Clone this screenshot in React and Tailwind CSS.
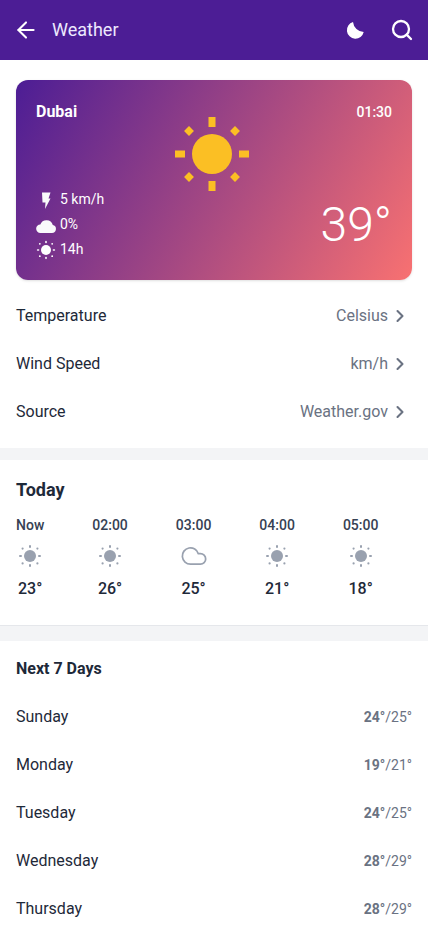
import React from 'react';
import { ArrowLeft, ChevronRight, Search, Cloud } from 'lucide-react';

const settings = [
  { label: 'Temperature', value: 'Celsius' },
  { label: 'Wind Speed', value: 'km/h' },
  { label: 'Source', value: 'Weather.gov' },
];

const hours = [
  { time: 'Now', temp: '23°', icon: 'sun' },
  { time: '02:00', temp: '26°', icon: 'sun' },
  { time: '03:00', temp: '25°', icon: 'cloud' },
  { time: '04:00', temp: '21°', icon: 'sun' },
  { time: '05:00', temp: '18°', icon: 'sun' },
];

const days = [
  { day: 'Sunday', high: '24°', low: '25°' },
  { day: 'Monday', high: '19°', low: '21°' },
  { day: 'Tuesday', high: '24°', low: '25°' },
  { day: 'Wednesday', high: '28°', low: '29°' },
  { day: 'Thursday', high: '28°', low: '29°' },
];

const BigSun = () => (
  <svg width="74" height="74" viewBox="0 0 74 74" fill="#fbbf24">
    <circle cx="37" cy="37" r="20" />
    <rect x="33.5" y="0" width="7" height="10" />
    <rect x="33.5" y="64" width="7" height="10" />
    <rect x="0" y="33.5" width="10" height="7" />
    <rect x="64" y="33.5" width="10" height="7" />
    <rect x="10.5" y="10.5" width="7" height="7" transform="rotate(45 14 14)" />
    <rect x="56.5" y="10.5" width="7" height="7" transform="rotate(45 60 14)" />
    <rect x="10.5" y="56.5" width="7" height="7" transform="rotate(45 14 60)" />
    <rect x="56.5" y="56.5" width="7" height="7" transform="rotate(45 60 60)" />
  </svg>
);

const SmallSun = ({ className, size = 24 }) => (
  <svg width={size} height={size} viewBox="0 0 24 24" fill="currentColor" className={className}>
    <circle cx="12" cy="12" r="6" />
    <rect x="11" y="1" width="2" height="3" rx="1" />
    <rect x="11" y="20" width="2" height="3" rx="1" />
    <rect x="1" y="11" width="3" height="2" rx="1" />
    <rect x="20" y="11" width="3" height="2" rx="1" />
    <circle cx="4.6" cy="4.6" r="1.1" />
    <circle cx="19.4" cy="4.6" r="1.1" />
    <circle cx="4.6" cy="19.4" r="1.1" />
    <circle cx="19.4" cy="19.4" r="1.1" />
  </svg>
);

export default function App() {
  return (
    <div className="h-screen overflow-hidden bg-white font-['Roboto',sans-serif] text-gray-800">
      {/* HEADER */}
      <header className="h-[60px] bg-[#4c1d95] flex items-center justify-between px-4 text-white">
        <div className="flex items-center gap-[13px]">
          <ArrowLeft size={26} strokeWidth={1.9} className="-ml-[3px]" />
          <h1 className="text-lg text-violet-100">Weather</h1>
        </div>
        <div className="flex items-center gap-[25px] -mr-[2px]">
          <svg width="20" height="20" viewBox="0 0 20 20" fill="currentColor">
            <path d="M8 2A8.5 8.5 0 1 0 18.7 12 11 11 0 0 1 8 2z" />
          </svg>
          <Search size={24} strokeWidth={2.3} />
        </div>
      </header>

      {/* CARD */}
      <div className="px-4 pt-5 pb-3">
        <div className="relative h-[200px] rounded-xl bg-[linear-gradient(120deg,#4c1d95,#f87171)] shadow px-5 pt-5 pb-[18px] flex flex-col justify-between text-white">
          <div className="flex justify-between items-start">
            <span className="font-bold leading-6">Dubai</span>
            <span className="text-sm font-medium leading-6">01:30</span>
          </div>
          <div className="absolute left-[159px] top-[37px]">
            <BigSun />
          </div>
          <div className="flex justify-between items-end">
            <div className="text-sm leading-[25px]">
              <div className="flex items-center gap-1">
                <svg width="20" height="20" viewBox="0 0 20 20" fill="#f9fafb">
                  <path d="M6 2.5h8.5l-2 6h2L9 19l.5-6.5h-3z" />
                </svg>
                <span>5 km/h</span>
              </div>
              <div className="flex items-center gap-1">
                <svg width="20" height="20" viewBox="0 0 20 20" fill="#f9fafb" className="mt-[3px]">
                  <path d="M4.4 17h11.4a4 4 0 0 0 1-7.9A6.6 6.6 0 0 0 4.3 8.6 4.2 4.2 0 0 0 4.400 17z" />
                </svg>
                <span>0%</span>
              </div>
              <div className="flex items-center gap-1">
                <SmallSun size={20} className="text-white" />
                <span>14h</span>
              </div>
            </div>
            <span className="text-5xl font-light leading-[48px] mb-[13px]">39°</span>
          </div>
        </div>
      </div>

      {/* SETTINGS */}
      <div className="pb-3">
        {settings.map(s => (
          <div key={s.label} className="h-12 px-4 flex items-center justify-between">
            <span>{s.label}</span>
            <div className="flex items-center text-gray-500">
              <span>{s.value}</span>
              <ChevronRight size={20} strokeWidth={2.5} className="mx-[2px]" />
            </div>
          </div>
        ))}
      </div>

      {/* TODAY */}
      <section className="border-t-[12px] border-gray-100 pb-6">
        <h2 className="px-4 pt-[18px] text-lg font-bold leading-6">Today</h2>
        <div className="flex gap-12 px-4 mt-[13px]">
          {hours.map(h => (
            <div key={h.time} className="flex flex-col items-center">
              <span className="text-sm font-medium leading-5 text-gray-700">{h.time}</span>
              <div className="my-[9px] h-6 flex items-center text-gray-400">
                {h.icon === 'sun' ? <SmallSun /> : <Cloud size={28} strokeWidth={1.5} />}
              </div>
              <span className="font-medium leading-6">{h.temp}</span>
            </div>
          ))}
        </div>
      </section>

      {/* NEXT 7 DAYS */}
      <div className="h-4 bg-gray-100 border-t border-gray-200" />
      <section>
        <h2 className="px-4 pt-[16px] pb-[12px] font-bold leading-6">Next 7 Days</h2>
        {days.map(d => (
          <div key={d.day} className="h-12 px-4 flex items-center justify-between">
            <span>{d.day}</span>
            <span className="text-sm text-gray-500">
              <b className="font-bold">{d.high}</b>/{d.low}
            </span>
          </div>
        ))}
      </section>
    </div>
  );
}
